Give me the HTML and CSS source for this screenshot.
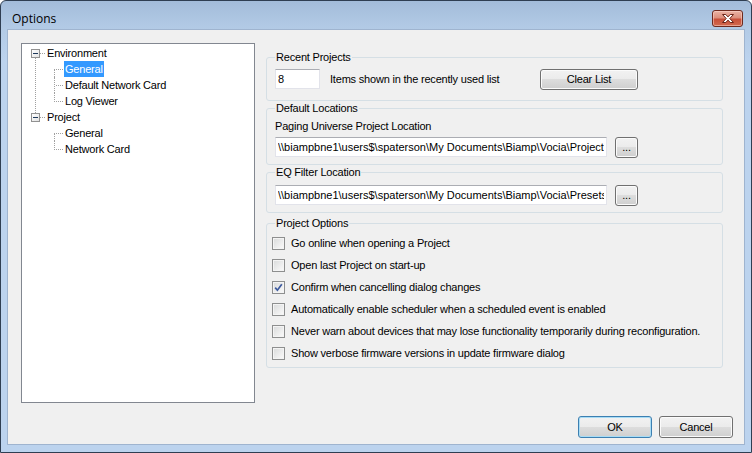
FILE: index.html
```html
<!DOCTYPE html>
<html lang="en">
<head>
    <meta charset="utf-8">
    <title>Options</title>
    <link rel="stylesheet" href="styles.css">
</head>
<body>

    <div class="window">

        <!-- title bar -->
        <div class="titlebar">
            <span class="title">Options</span>
            <div class="close-btn">
                <svg width="14" height="11" viewBox="0 0 14 11">
                    <path d="M1.5 1.5h3.3l2.2 2.4 2.2-2.4h3.3l-3.7 4 3.7 4h-3.3l-2.2-2.4-2.2 2.4h-3.3l3.7-4z" fill="#fff" stroke="#6a2418" stroke-width="1" stroke-linejoin="round"/>
                </svg>
            </div>
        </div>

        <div class="client">
            <div class="main">

                <!-- tree -->
                <div class="tree">
                    <ul class="tree-root">
                        <li class="root-node has-next">
                            <div class="tree-row"><span class="expander"></span><span class="tree-label">Environment</span></div>
                            <ul class="tree-children">
                                <li class="tree-row child"><span class="branch"></span><span class="tree-label selected">General</span></li>
                                <li class="tree-row child"><span class="branch"></span><span class="tree-label">Default Network Card</span></li>
                                <li class="tree-row child"><span class="branch"></span><span class="tree-label">Log Viewer</span></li>
                            </ul>
                        </li>
                        <li class="root-node">
                            <div class="tree-row"><span class="expander"></span><span class="tree-label">Project</span></div>
                            <ul class="tree-children">
                                <li class="tree-row child"><span class="branch"></span><span class="tree-label">General</span></li>
                                <li class="tree-row child"><span class="branch"></span><span class="tree-label">Network Card</span></li>
                            </ul>
                        </li>
                    </ul>
                </div>

                <!-- settings -->
                <div class="settings">
                    <fieldset class="group group-recent">
                        <legend>Recent Projects</legend>
                        <div class="field-row">
                            <input class="textbox textbox-count" type="text" value="8">
                            <span class="recent-text">Items shown in the recently used list</span>
                            <button class="btn btn-clear">Clear List</button>
                        </div>
                    </fieldset>

                    <fieldset class="group group-locations">
                        <legend>Default Locations</legend>
                        <div class="field-label">Paging Universe Project Location</div>
                        <div class="field-row">
                            <input class="textbox textbox-path" type="text" value="\\biampbne1\users$\spaterson\My Documents\Biamp\Vocia\Projects">
                            <button class="btn btn-browse">...</button>
                        </div>
                    </fieldset>

                    <fieldset class="group group-eq">
                        <legend>EQ Filter Location</legend>
                        <div class="field-row">
                            <input class="textbox textbox-path" type="text" value="\\biampbne1\users$\spaterson\My Documents\Biamp\Vocia\Presets">
                            <button class="btn btn-browse">...</button>
                        </div>
                    </fieldset>

                    <fieldset class="group group-options">
                        <legend>Project Options</legend>
                        <ul class="check-list">
                            <li class="check-row"><span class="checkbox"></span>Go online when opening a Project</li>
                            <li class="check-row"><span class="checkbox"></span>Open last Project on start-up</li>
                            <li class="check-row"><span class="checkbox checked"><svg width="11" height="11" viewBox="0 0 11 11"><path d="M2.2 5.6l2.2 2.6 4.4-6" fill="none" stroke="#3d5a9e" stroke-width="1.7"/></svg></span>Confirm when cancelling dialog changes</li>
                            <li class="check-row"><span class="checkbox"></span>Automatically enable scheduler when a scheduled event is enabled</li>
                            <li class="check-row"><span class="checkbox"></span>Never warn about devices that may lose functionality temporarily during reconfiguration.</li>
                            <li class="check-row"><span class="checkbox"></span>Show verbose firmware versions in update firmware dialog</li>
                        </ul>
                    </fieldset>
                </div>
            </div>

            <!-- dialog buttons -->
            <div class="footer">
                <button class="btn btn-dialog btn-default">OK</button>
                <button class="btn btn-dialog">Cancel</button>
            </div>
        </div>
    </div>

</body>
</html>
```

FILE: styles.css
```css
* {
    margin: 0;
    padding: 0;
    box-sizing: border-box;
}

body {
    font-family: "Liberation Sans", Arial, sans-serif;
    font-size: 11px;
    letter-spacing: -0.2px;
    color: #000;
    background: #fff;
}

        /* Window frame */

.window {
    width: 752px;
    height: 453px;
    display: flex;
    flex-direction: column;
    border: 1px solid #2f3e52;
    border-radius: 6px 6px 0 0;
    background: linear-gradient(#a3bcda 0px, #b3cbe6 28px, #bcd3ee 60px, #bcd3ee 100%);
}

.titlebar {
    height: 28px;
    display: flex;
    align-items: flex-start;
    justify-content: space-between;
    padding: 0 8px 0 11px;
}

.title {
    font-family: "Open Sans", "Noto Sans", sans-serif;
    font-size: 12px;
    letter-spacing: 0;
    line-height: 16px;
    margin-top: 10px;
    color: #000;
}

.close-btn {
    width: 31px;
    height: 17px;
    margin-top: 9px;
    display: flex;
    align-items: center;
    justify-content: center;
    border: 1px solid #6d2a1f;
    border-radius: 3px;
    background: linear-gradient(#eab4a6 0%, #dc8f7c 45%, #c8503a 55%, #d26a4f 100%);
    box-shadow: inset 0 0 0 1px rgba(255, 220, 210, .5);
}

.client {
    height: 416px;
    margin: 0 6px 7px 6px;
    border: 1px solid #9fb4cf;
    background: #f0f0f0;
    display: flex;
    flex-direction: column;
}

.main {
    display: flex;
    padding: 13px 0 0 13px;
}

        /* Tree view */

.tree {
    width: 234px;
    height: 360px;
    background: #fff;
    border: 1px solid #828790;
    padding-top: 1px;
}

.tree ul {
    list-style: none;
}

.root-node {
    position: relative;
}

.root-node.has-next::before {
    content: '';
    position: absolute;
    left: 13px;
    top: 13px;
    height: 55px;
    border-left: 1px dotted #a0a0a0;
}

.tree-row {
    height: 16px;
    line-height: 16px;
    display: flex;
    align-items: center;
    padding-left: 9px;
    white-space: nowrap;
}

.tree-row.child {
    padding-left: 24px;
}

.expander {
    position: relative;
    width: 9px;
    height: 9px;
    margin-right: 6px;
    border: 1px solid #919191;
    background: linear-gradient(135deg, #fff 0%, #e2e2e2 100%);
}

.expander::after {
    content: '';
    position: absolute;
    left: 1px;
    top: 3px;
    width: 5px;
    height: 1px;
    background: #1e395b;
}

.expander::before {
    content: '';
    position: absolute;
    left: 8px;
    top: 3px;
    width: 5px;
    border-top: 1px dotted #a0a0a0;
}

.branch {
    position: relative;
    width: 18px;
    height: 16px;
}

.branch::before {
    content: '';
    position: absolute;
    left: 8px;
    top: 0;
    height: 16px;
    border-left: 1px dotted #a0a0a0;
}

.child:first-child .branch::before {
    top: 8px;
    height: 8px;
}

.child:last-child .branch::before {
    top: 0;
    height: 9px;
}

.branch::after {
    content: '';
    position: absolute;
    left: 10px;
    top: 8px;
    width: 7px;
    border-top: 1px dotted #a0a0a0;
}

.tree-label {
    padding: 0 1px;
    line-height: 16px;
}

.tree-label.selected {
    background: #3399ff;
    color: #fff;
}

        /* Settings groups */

.settings {
    width: 457px;
    margin: 8px 0 0 11px;
}

.group {
    border: 1px solid #d5dfe5;
    border-radius: 3px;
    padding: 0 8px;
    min-width: 0;
}

.group legend {
    padding: 0 1px;
    line-height: 13px;
}

.group-recent {
    padding-top: 5px;
    padding-bottom: 11px;
}

.group-locations {
    margin-top: 1px;
    padding-top: 5px;
    padding-bottom: 7px;
}

.group-eq {
    margin-top: 1px;
    padding-top: 6px;
    padding-bottom: 7px;
}

.group-options {
    margin-top: 4px;
    padding-top: 2px;
    padding-bottom: 3px;
}

.field-row {
    display: flex;
    align-items: center;
    height: 20px;
}

.field-label {
    line-height: 13px;
    margin-bottom: 4px;
}

.textbox {
    height: 20px;
    font: inherit;
    letter-spacing: 0;
    color: #000;
    background: #fff;
    border: 1px solid #e2e3ea;
    border-top-color: #abadb3;
    padding: 0 2px;
    outline: none;
}

.textbox-count {
    width: 45px;
}

.textbox-path {
    width: 332px;
}

.recent-text {
    width: 210px;
    margin-left: 10px;
}

        /* Buttons */

.btn {
    font: inherit;
    letter-spacing: inherit;
    color: #000;
    border: 1px solid #707070;
    border-radius: 3px;
    background: linear-gradient(#f2f2f2 0%, #ebebeb 50%, #dddddd 50%, #cfcfcf 100%);
    box-shadow: inset 0 0 0 1px #fbfbfb;
}

.btn-clear {
    width: 98px;
    height: 21px;
}

.btn-browse {
    width: 23px;
    height: 21px;
    margin-left: 8px;
    line-height: 10px;
}

.footer {
    display: flex;
    justify-content: flex-end;
    gap: 7px;
    padding: 13px 11px 0 0;
}

.btn-dialog {
    width: 74px;
    height: 22px;
}

.btn-default {
    border-color: #3c7fb1;
    box-shadow: inset 0 0 0 1px #a8dcf5;
}

        /* Checkboxes */

.check-list {
    list-style: none;
    margin-left: -3px;
}

.check-row {
    height: 22px;
    display: flex;
    align-items: center;
    white-space: nowrap;
}

.checkbox {
    width: 13px;
    height: 13px;
    margin-right: 6px;
    display: flex;
    align-items: center;
    justify-content: center;
    border: 1px solid #8e8f8f;
    background: linear-gradient(135deg, #d9dadb 0%, #f1f1f1 70%, #fbfbfb 100%);
    box-shadow: inset 0 0 0 1px #f4f4f4;
}
```
